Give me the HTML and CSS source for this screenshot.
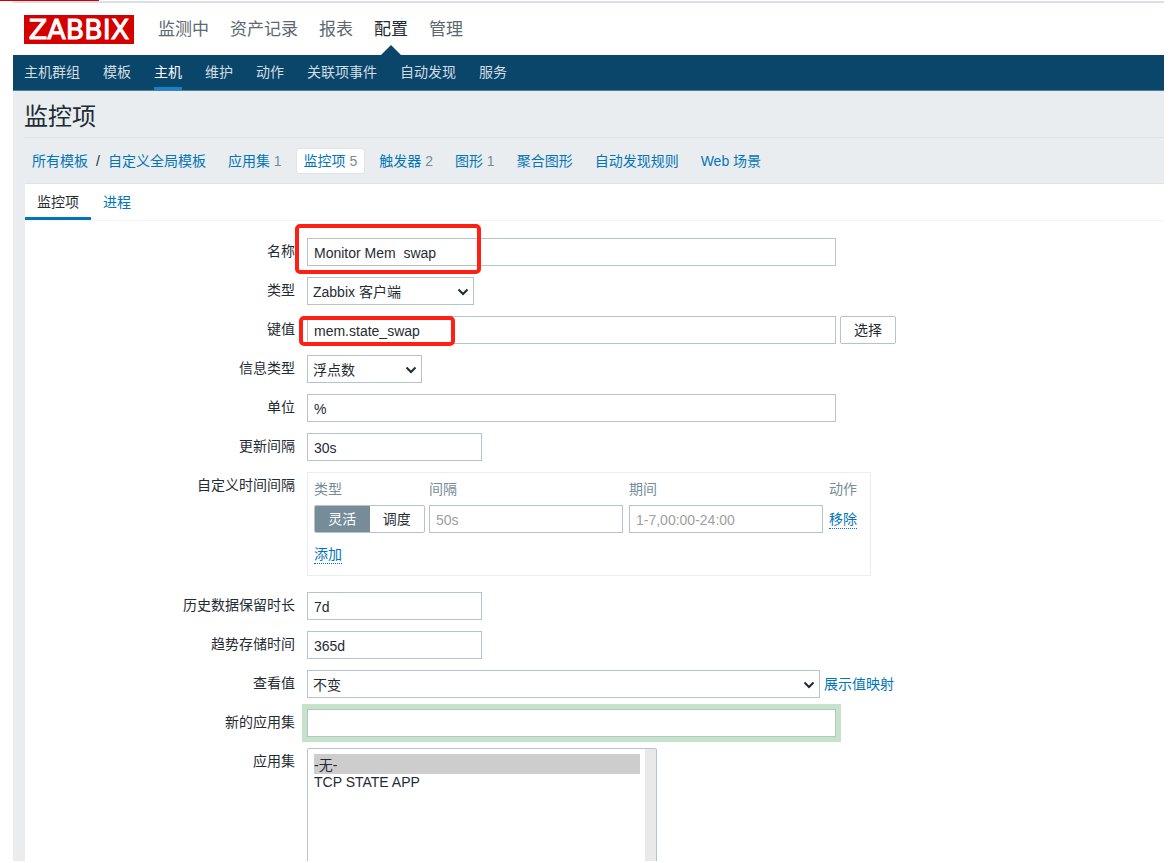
FILE: index.html
```html
<!DOCTYPE html>
<html lang="zh-CN">
<head>
<meta charset="utf-8">
<meta name="viewport" content="width=device-width, initial-scale=1">
<title>监控项</title>
<link rel="stylesheet" href="styles.css">
</head>
<body>
<div class="page-marker"></div>
<div class="app">
  <header class="header">
    <a class="logo" href="#">ZABBIX</a>
    <nav class="main-nav">
      <a href="#">监测中</a>
      <a href="#">资产记录</a>
      <a href="#">报表</a>
      <a class="active" href="#">配置</a>
      <a href="#">管理</a>
    </nav>
  </header>
  <nav class="sub-nav">
    <a href="#">主机群组</a>
    <a href="#">模板</a>
    <a class="active" href="#">主机</a>
    <a href="#">维护</a>
    <a href="#">动作</a>
    <a href="#">关联项事件</a>
    <a href="#">自动发现</a>
    <a href="#">服务</a>
  </nav>
  <main class="content">
    <h1 class="title">监控项</h1>
    <nav class="crumbs">
      <div class="path"><a href="#">所有模板</a><span>/</span><a href="#">自定义全局模板</a></div>
      <div class="crumb"><a href="#">应用集</a> <span class="count">1</span></div>
      <div class="crumb selected"><a href="#">监控项</a> <span class="count">5</span></div>
      <div class="crumb"><a href="#">触发器</a> <span class="count">2</span></div>
      <div class="crumb"><a href="#">图形</a> <span class="count">1</span></div>
      <div class="crumb"><a href="#">聚合图形</a></div>
      <div class="crumb"><a href="#">自动发现规则</a></div>
      <div class="crumb"><a href="#">Web 场景</a></div>
    </nav>
    <section class="panel">
      <div class="tabs">
        <a class="tab active" href="#">监控项</a>
        <a class="tab" href="#">进程</a>
      </div>
      <form class="form">
        <label for="name">名称</label>
        <div class="field">
          <input class="text wide" id="name" type="text" value="Monitor Mem  swap">
          <span class="mark mark-name"></span>
        </div>

        <label for="type">类型</label>
        <div class="field">
          <div class="select type-select">
            <select id="type"><option>Zabbix 客户端</option></select>
            <svg class="chevron" viewBox="0 0 12 8"><path d="M1.500 1.500 6 6l4.500-4.500"/></svg>
          </div>
        </div>

        <label for="key">键值</label>
        <div class="field">
          <input class="text wide" id="key" type="text" value="mem.state_swap">
          <button class="button" type="button">选择</button>
          <span class="mark mark-key"></span>
        </div>

        <label for="info">信息类型</label>
        <div class="field">
          <div class="select info-select">
            <select id="info"><option>浮点数</option></select>
            <svg class="chevron" viewBox="0 0 12 8"><path d="M1.500 1.500 6 6l4.500-4.500"/></svg>
          </div>
        </div>

        <label for="units">单位</label>
        <div class="field"><input class="text wide" id="units" type="text" value="%"></div>

        <label for="delay">更新间隔</label>
        <div class="field"><input class="text short" id="delay" type="text" value="30s"></div>

        <span class="label" id="flex-label">自定义时间间隔</span>
        <div class="intervals">
          <table aria-labelledby="flex-label">
            <thead>
              <tr><th class="col-type">类型</th><th class="col-time">间隔</th><th class="col-time">期间</th><th>动作</th></tr>
            </thead>
            <tbody>
              <tr>
                <td>
                  <div class="segmented">
                    <input type="radio" name="mode" id="flexible" checked><label for="flexible">灵活</label>
                    <input type="radio" name="mode" id="scheduling"><label for="scheduling">调度</label>
                  </div>
                </td>
                <td><input class="text time" type="text" placeholder="50s" aria-label="间隔"></td>
                <td><input class="text time" type="text" placeholder="1-7,00:00-24:00" aria-label="期间"></td>
                <td><a class="action" href="#">移除</a></td>
              </tr>
              <tr class="add-row"><td colspan="4"><a class="action" href="#">添加</a></td></tr>
            </tbody>
          </table>
        </div>

        <label for="history">历史数据保留时长</label>
        <div class="field"><input class="text short" id="history" type="text" value="7d"></div>

        <label for="trends">趋势存储时间</label>
        <div class="field"><input class="text short" id="trends" type="text" value="365d"></div>

        <label for="valuemap">查看值</label>
        <div class="field">
          <div class="select map-select">
            <select id="valuemap"><option>不变</option></select>
            <svg class="chevron" viewBox="0 0 12 8"><path d="M1.500 1.500 6 6l4.500-4.500"/></svg>
          </div>
          <a href="#">展示值映射</a>
        </div>

        <label for="new-app">新的应用集</label>
        <div class="field"><input class="text wide highlighted" id="new-app" type="text"></div>

        <label for="apps">应用集</label>
        <div class="field">
          <select class="listbox" id="apps" multiple size="10">
            <option selected>-无-</option>
            <option>TCP STATE APP</option>
          </select>
        </div>
      </form>
    </section>
  </main>
</div>
</body>
</html>
```

FILE: styles.css
```css
* {
  box-sizing: border-box;
}

body {
  margin: 0;
  height: 100vh;
  padding: 1px 7px 2px 13px;
  overflow: hidden;
  background: #fff;
  color: #1f2c33;
  font: 14px/20px "Liberation Sans", "Noto Sans CJK SC", sans-serif;
}

a {
  color: #0275b8;
  text-decoration: none;
}

input,
select,
button {
  margin: 0;
  color: #1f2c33;
  font: inherit;
}

.page-marker {
  position: absolute;
  top: 0;
  left: 0;
  width: 99px;
  height: 1px;
  background: #d40000;
}

.app {
  display: flex;
  flex-direction: column;
  height: 100%;
  overflow: hidden;
  border-top: 2px solid #dcdfe5;
}

/* Header */
.header {
  display: flex;
  flex: none;
  align-items: center;
  gap: 24px;
  height: 52px;
  padding-left: 11px;
}

.logo {
  width: 110px;
  height: 29px;
  background: #d40000;
  color: #fff;
  font: 27px/30px "DejaVu Sans", sans-serif;
  text-align: center;
  -webkit-text-stroke: 1px #fff;
}

.main-nav {
  display: flex;
  gap: 21px;
  height: 52px;
  font-size: 17px;
  line-height: 54px;
}

.main-nav a {
  position: relative;
  color: #5c6970;
}

.main-nav .active {
  color: #1f2c33;
}

.main-nav .active::after {
  content: "";
  position: absolute;
  bottom: 0;
  left: 50%;
  margin-left: -10px;
  border: 10px solid transparent;
  border-top: 0;
  border-bottom-color: #0a466a;
}

.sub-nav {
  display: flex;
  flex: none;
  gap: 23px;
  height: 36px;
  padding-left: 11px;
  border-bottom: 1px solid #557b9b;
  background: #0a466a;
  line-height: 35px;
}

.sub-nav a {
  color: #d3dde3;
}

.sub-nav .active {
  border-bottom: 3px solid #0f87cc;
  color: #fff;
}

/* Page heading and breadcrumbs */
.content {
  display: flex;
  flex: 1;
  flex-direction: column;
  min-height: 0;
  padding-left: 11px;
  background: #e9edf0;
}

.title {
  flex: none;
  height: 47px;
  margin: 0;
  border-bottom: 1px solid #e0e4e8;
  font-size: 24px;
  font-weight: 400;
  line-height: 52px;
}

.crumbs {
  display: flex;
  flex: none;
  align-items: center;
  gap: 8px;
  height: 45px;
}

.path {
  display: flex;
  gap: 8px;
  padding: 0 7px 0 8px;
}

.crumb {
  padding: 2px 7px;
  border-radius: 2px;
}

.crumb.selected {
  background: #fff;
  box-shadow: 0 0 0 1px #dfe4e7;
}

.count {
  color: #768d99;
}

.panel {
  flex: 1;
  min-height: 0;
  margin-left: 1px;
  border-top: 1px solid #dfe4e7;
  background: #fff;
}

.tabs {
  display: flex;
  height: 37px;
  border-bottom: 1px solid #f2f4f5;
}

.tab {
  padding: 0 12px;
  line-height: 36px;
}

.tab.active {
  border-bottom: 3px solid #0275b8;
  color: #1f2c33;
}

/* Item form */
.form {
  display: grid;
  grid-template-columns: 270px minmax(0, 1fr);
  gap: 11px 12px;
  padding-top: 17px;
}

.form > label,
.label {
  line-height: 26px;
  text-align: right;
}

.field {
  display: flex;
  position: relative;
  gap: 4px;
  line-height: 28px;
}

.text {
  width: 529px;
  height: 28px;
  padding: 1px 6px 0;
  border: 1px solid #b6c3c9;
  background: #fff;
}

.text.short {
  width: 175px;
}

.text.time {
  display: block;
  width: 194px;
}

.text::placeholder {
  color: #a0a0a0;
}

.text.highlighted {
  box-shadow: 0 0 0 5px #c5e3c8;
}

.select {
  display: flex;
  position: relative;
}

.select select {
  width: 100%;
  height: 28px;
  padding: 0 24px 0 5px;
  border: 1px solid #b6c3c9;
  border-radius: 0;
  appearance: none;
  background: #fff;
}

.type-select {
  width: 167px;
}

.info-select {
  width: 115px;
}

.map-select {
  width: 513px;
}

.chevron {
  position: absolute;
  top: 11px;
  right: 5px;
  width: 12px;
  height: 8px;
  fill: none;
  stroke: #1f2c33;
  stroke-width: 2;
  pointer-events: none;
}

.button {
  width: 56px;
  height: 28px;
  padding: 0;
  border: 1px solid #b6c3c9;
  border-radius: 2px;
  background: #fff;
  line-height: 26px;
}

.mark {
  position: absolute;
  border: 4px solid #ff2015;
  border-radius: 5px;
  pointer-events: none;
}

.mark-name {
  top: -14px;
  left: -12px;
  width: 186px;
  height: 50px;
}

.mark-key {
  top: 0;
  left: -8px;
  width: 156px;
  height: 30px;
}

/* Custom intervals */
.intervals {
  width: 564px;
  margin-bottom: 5px;
  padding: 0 6px;
  border: 1px solid #ebeef0;
}

.intervals table {
  width: 100%;
  border-collapse: collapse;
}

.intervals th {
  height: 32px;
  padding: 0;
  color: #768d99;
  font-weight: 400;
  text-align: left;
}

.intervals td {
  padding: 0;
}

.col-type {
  width: 115px;
}

.col-time {
  width: 200px;
}

.add-row {
  height: 42px;
}

.segmented {
  display: flex;
  width: 111px;
  overflow: hidden;
  border: 1px solid #b6c3c9;
  border-radius: 2px;
}

.segmented input {
  position: absolute;
  opacity: 0;
}

.segmented label {
  flex: 1;
  line-height: 26px;
  text-align: center;
}

.segmented input:checked + label {
  background: #768d99;
  color: #fff;
}

.action {
  display: inline-block;
  border-bottom: 1px dotted #0275b8;
  line-height: 18px;
}

/* Applications list */
.listbox {
  width: 350px;
  height: 160px;
  padding: 5px 16px 5px 6px;
  overflow: hidden;
  border: 1px solid #b6c3c9;
  border-radius: 2px;
  background: linear-gradient(#e9e9e9, #e9e9e9) right / 11px 100% no-repeat #fff;
}

.listbox option {
  min-height: 0;
  padding: 0;
  line-height: 19px;
}

.listbox option:checked {
  background: #cdcdcd linear-gradient(#cdcdcd, #cdcdcd);
  color: #1f2c33;
}
```
